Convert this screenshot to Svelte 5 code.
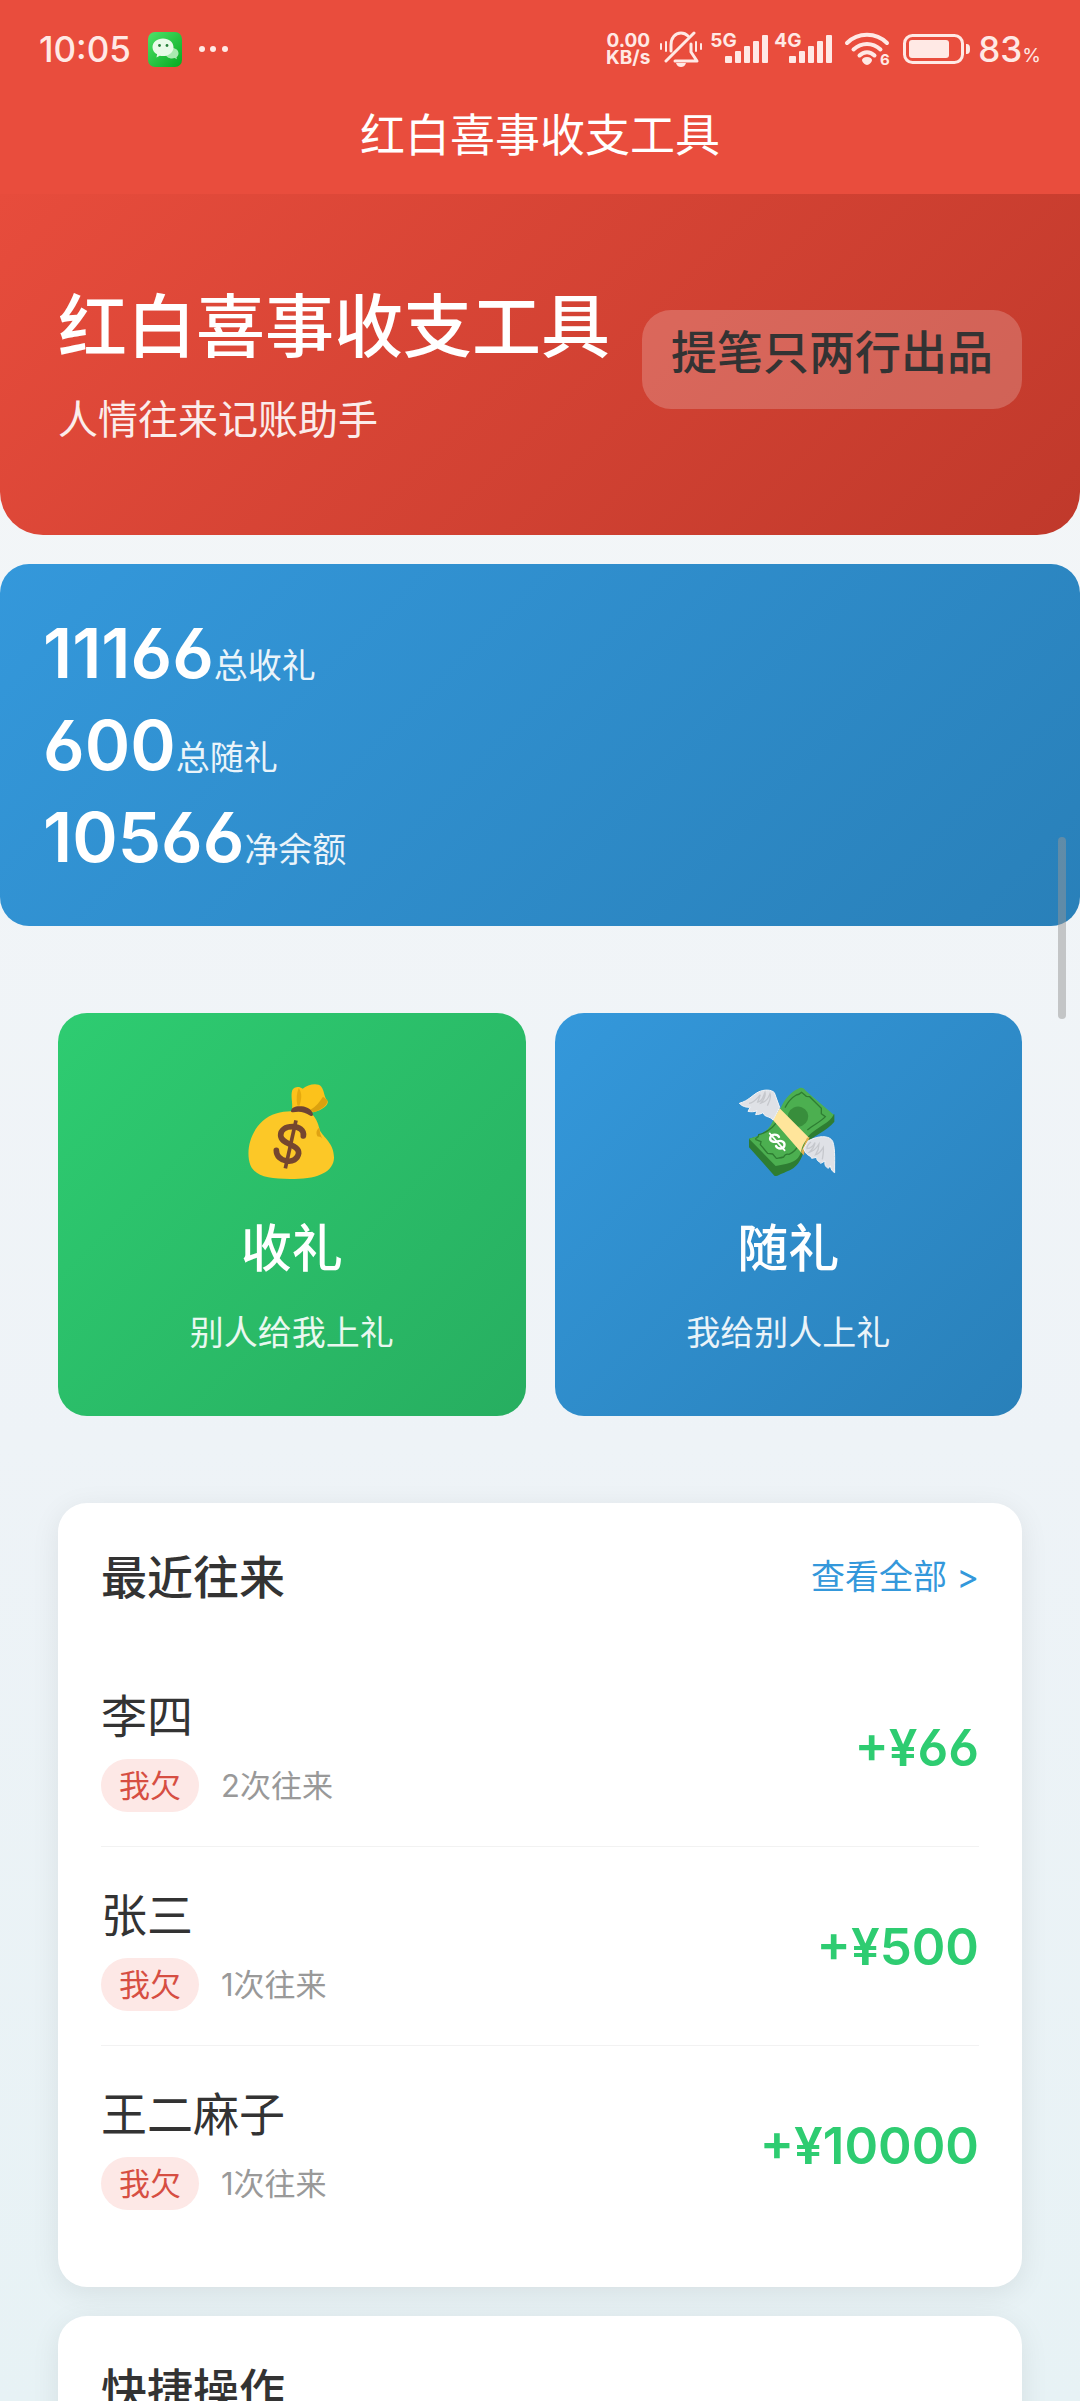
<script>
	const stats = [
		{ value: 11166, label: '总收礼' },
		{ value: 600, label: '总随礼' },
		{ value: 10566, label: '净余额' }
	];

	const records = [
		{ name: '李四', tag: '我欠', count: 2, amount: 66 },
		{ name: '张三', tag: '我欠', count: 1, amount: 500 },
		{ name: '王二麻子', tag: '我欠', count: 1, amount: 10000 }
	];

	const networks = ['5G', '4G'];
</script>

<div class="app">
	<header class="top">
		<div class="status">
			<div class="status-group">
				<span class="time">10:05</span>
				<svg class="wechat" viewBox="0 0 34 35" aria-label="微信">
					<defs>
						<linearGradient id="wechat-bg" x1="0" y1="0" x2="1" y2="1">
							<stop offset="0" stop-color="#4fe26a" />
							<stop offset="1" stop-color="#06a91f" />
						</linearGradient>
					</defs>
					<rect width="34" height="35" rx="7" fill="url(#wechat-bg)" />
					<path d="M24 16c4 0 6.500 2.300 6.500 5.200 0 1.800-.8 3-2 4l.4 2-2.200-1.100c-5 1.200-9.200-1-9.200-4.900 0-3 2.700-5.200 6.500-5.200z" fill="#a9eab0" />
					<path d="M15 6.500c6 0 10.500 3.800 10.500 8.800s-4.500 8.800-10.500 8.800c-1.200 0-2.300-.1-3.300-.4L8.500 25.500l.6-3.200C6 20.700 4.500 18.200 4.500 15.300c0-5 4.500-8.800 10.500-8.800z" fill="#e9fbe9" />
					<circle cx="11.500" cy="13.500" r="1.400" fill="#28803b" />
					<circle cx="19" cy="13.500" r="1.400" fill="#28803b" />
				</svg>
				<svg class="dots" viewBox="0 0 30 6" aria-hidden="true">
					<circle cx="3" cy="3" r="3" />
					<circle cx="14" cy="3" r="3" />
					<circle cx="26" cy="3" r="3" />
				</svg>
			</div>

			<div class="status-group">
				<span class="speed"><span>0.00</span><span>KB/s</span></span>
				<svg class="bell" viewBox="0 0 42 36" aria-hidden="true">
					<g fill="none" stroke="currentColor" stroke-width="3" stroke-linecap="round" stroke-linejoin="round">
						<path d="M11 20v-6c0-7 4-12 10-12 3 0 5 1 7 3" />
						<path d="M31 13v8l6 9H15" />
						<path d="M6 30 34 2" />
						<path d="M6 11v9M1 13v5M36 11v9M41 13v5" stroke-width="2" />
					</g>
					<path d="M16 32h10c-1 3-3 4-5 4s-4-1-5-4z" fill="currentColor" />
				</svg>
				{#each networks as network (network)}
					<span class="network">
						<span>{network}</span>
						<svg viewBox="0 0 44 28" aria-hidden="true">
							<rect x="0" y="21" width="7" height="7" rx="1" />
							<rect x="10" y="16" width="6" height="12" rx="1" />
							<rect x="19" y="11" width="6" height="17" rx="1" />
							<rect x="28" y="6" width="6" height="22" rx="1" />
							<rect x="37" y="0" width="6" height="28" rx="1" />
						</svg>
					</span>
				{/each}
				<svg class="wifi" viewBox="0 0 46 34" aria-hidden="true">
					<g fill="none" stroke="currentColor" stroke-width="4" stroke-linecap="round">
						<path d="M2 11c11-11 29-11 40 0" />
						<path d="M8.500 17.500c8-7.500 19-7.500 27 0" />
						<path d="M14.500 23.500c4.500-4.500 10.500-4.500 15 0" />
					</g>
					<path d="M22 25c3 0 5 1.500 5 3 0 2-3 5-5 5s-5-3-5-5c0-1.500 2-3 5-3z" fill="currentColor" />
					<text x="35" y="33" font-size="15" font-weight="700" fill="currentColor">6</text>
				</svg>
				<svg class="battery" viewBox="0 0 67 30" aria-hidden="true">
					<rect x="1.500" y="1.500" width="58" height="27" rx="8" fill="none" stroke="currentColor" stroke-width="3" />
					<rect x="6" y="6" width="40" height="18" rx="3" fill="currentColor" />
					<path d="M63 10c3 0 4 1 4 5s-1 5-4 5z" fill="currentColor" />
				</svg>
				<span class="level">83<small>%</small></span>
			</div>
		</div>
		<div class="nav-title">红白喜事收支工具</div>
	</header>

	<main class="page">
		<section class="hero">
			<div>
				<h1>红白喜事收支工具</h1>
				<p>人情往来记账助手</p>
			</div>
			<span class="badge">提笔只两行出品</span>
		</section>

		<section class="stats">
			{#each stats as stat (stat.label)}
				<div class="stat"><strong>{stat.value}</strong><span>{stat.label}</span></div>
			{/each}
		</section>

		<section class="actions">
			<button class="action receive" type="button">
				<svg viewBox="72 72 288 288" aria-hidden="true">
					<path d="M216 148c3-20-5-40 1-58 6-10 20-12 31-4 14-12 45-20 56-6 10 14 6 26 19 44 4 10-16 27-43 33z" fill="#fcc21b" />
					<path d="M322 120c4 12-18 31-42 37l-10-7c18-10 30-26 39-40z" fill="#dba10f" />
					<path d="M236 84c12 16 8 36 2 54l-6-2c-4-18-2-36 4-52z" fill="#e5a90f" />
					<path d="M212 154c12-5 44-2 66 10 14 16 18 32 21 46 12 24 44 40 43 84-2 40-44 62-118 63-70 1-118-5-133-42-14-38-2-96 36-131 24-22 58-30 85-30z" fill="#fcc827" />
					<path d="M298 203c-10 6-11 19-4 27 6-1 9 2 13 6-5-10-8-20-9-33z" fill="#dfa313" />
					<path d="M213 153c1-12 16-16 32-14 18 2 34 12 34 26-2 4-5 4-8 2-18-12-34-14-52-10-4 0-6-1-6-4z" fill="#6d4334" />
					<path d="M250 228c3-18-14-28-32-28-22 0-36 10-36 26 0 28 56 26 54 54-3 18-19 26-36 23-18-3-31-14-31-32" fill="none" stroke="#75462f" stroke-width="17" stroke-linecap="round" />
					<path d="m228 181-32 144" stroke="#75462f" stroke-width="11" />
				</svg>
				<span class="action-title">收礼</span>
				<span class="action-desc">别人给我上礼</span>
			</button>
			<button class="action give" type="button">
				<svg viewBox="63 72 288 288" aria-hidden="true">
					<path d="M90 236v26l76 85c8 4 14-2 18-4 32-16 60-14 76-92 22-24 64-38 86-66v-22z" fill="#2e7d32" />
					<path d="M90 236c32-8 56-18 72-54l24-40c14-30 32-48 56-58 8-2 14 2 18 8l84 72c-10 24-52 38-74 62-16 20-20 44-28 60-12 24-40 26-72 32z" fill="#4caf50" />
					<path d="M109 238c2-6 10-4 10-14 34-8 50-30 68-58M198 143c8-16 20-30 34-38 7 0 10-2 16-8l14 12 10 1 35 35v16l12 9c-12 14-38 26-54 40M242 250c-8 16-16 26-32 33-8-2-12 0-16 8-9 3-16 3-22 4l-11-13-15-2-22-26 2-9-17-7" fill="none" stroke="#2e7d32" stroke-width="4" />
					<ellipse cx="237" cy="170" rx="31" ry="30" fill="#388e3c" transform="rotate(-25 237 170)" />
					<path d="m162 180 20-35 88 88c-14 10-22 28-24 44z" fill="#ffe59b" />
					<path d="m246 277 18-44 8-1-10 24-8 30z" fill="#dcae50" />
					<path d="M180 231c-4-9-22-10-26 1-4 12 12 16 22 12 12-4 23 3 20 14-4 10-20 10-25 0" fill="none" stroke="#fff" stroke-width="7" stroke-linecap="round" />
					<path d="m152 220 45 51" stroke="#fff" stroke-width="5" stroke-linecap="round" />
					<g fill="#dfe1e6" stroke="#f4f4f6" stroke-width="3">
						<path d="M162 180c-8-10-16-8-25-14l-5-8c-7 5-16 5-22 6l4-12c-7 4-20 4-27 2l7-13c-9 3-25-2-33-11 28-8 38-24 57-34 17-8 39-8 48 2l16 44z" />
						<path d="M254 266c10 26 20 17 24 29l15-3c-1 13 12 14 12 18l13-7c-2 16 4 18 10 22l6-8c2 12 6 17 13 21-1-28 3-70-6-94-8-16-34-17-56-9l-17 7z" />
					</g>
					<path d="M90 130c16-1 26-18 34-26l-8 22c15-1 17-19 22-29 3 12-4 22-12 32 17-5 22-15 27-28 5 12-3 26-8 36M276 246c-7 6-13 14-12 20 13-1 20-10 24-18-2 15-10 22-16 28 16-4 22-14 28-24 0 13-5 24-10 32 13-4 18-14 23-22 1 13-1 26-3 36" fill="none" stroke="#c6c8cd" stroke-width="4" />
				</svg>
				<span class="action-title">随礼</span>
				<span class="action-desc">我给别人上礼</span>
			</button>
		</section>

		<section class="card">
			<div class="card-head">
				<h2>最近往来</h2>
				<a href="#all">查看全部 &gt;</a>
			</div>
			<ul>
				{#each records as record (record.name)}
					<li>
						<div>
							<div class="name">{record.name}</div>
							<div class="meta">
								<span class="tag">{record.tag}</span>
								<span>{record.count}次往来</span>
							</div>
						</div>
						<span class="amount">+¥{record.amount}</span>
					</li>
				{/each}
			</ul>
		</section>

		<section class="card">
			<div class="card-head">
				<h2>快捷操作</h2>
			</div>
		</section>
	</main>

	<div class="scroll-thumb"></div>
</div>

<style>
	:global(body) {
		margin: 0;
	}

	.app {
		position: relative;
		display: flex;
		flex-direction: column;
		height: 100vh;
		overflow: hidden;
		background: linear-gradient(180deg, #f5f7f8, #eef3f7 60%, #e7f2f5);
		color: #333;
		font-family: Inter, 'Noto Sans CJK SC', sans-serif;
	}

	h1,
	h2,
	p,
	ul {
		margin: 0;
		padding: 0;
	}

	.top {
		flex: none;
		background: #e94d3d;
		color: #fff;
	}

	.status {
		display: flex;
		justify-content: space-between;
		align-items: center;
		height: 98px;
		padding: 0 39px;
		color: #ffe9e5;
	}

	.status-group {
		display: flex;
		align-items: center;
	}

	.time {
		font-size: 35px;
		font-weight: 500;
	}

	.wechat {
		width: 34px;
		height: 35px;
		margin: 0 17px;
	}

	.dots {
		width: 30px;
		height: 6px;
		fill: currentColor;
	}

	.speed {
		display: flex;
		flex-direction: column;
		margin-right: 10px;
		font-size: 19px;
		font-weight: 700;
		line-height: 17px;
		text-align: center;
	}

	.bell {
		width: 42px;
		height: 36px;
		margin-right: 8px;
	}

	.network {
		position: relative;
		display: flex;
		margin-right: 5px;
		padding-left: 15px;
	}

	.network span {
		position: absolute;
		top: -2px;
		left: 0;
		font-size: 19px;
		font-weight: 700;
		line-height: 16px;
	}

	.network svg {
		width: 44px;
		height: 28px;
		fill: currentColor;
	}

	.wifi {
		width: 46px;
		height: 34px;
		margin: 0 12px 0 7px;
		overflow: visible;
	}

	.battery {
		width: 67px;
		height: 30px;
		margin-right: 8px;
	}

	.level {
		font-size: 35px;
		font-weight: 500;
	}

	.level small {
		font-size: 19px;
		font-weight: 400;
	}

	.nav-title {
		padding-bottom: 20px;
		font-size: 45px;
		line-height: 76px;
		text-align: center;
	}

	.page {
		flex: 1;
		min-height: 0;
	}

	.hero {
		display: flex;
		justify-content: space-between;
		align-items: center;
		padding: 87px 58px;
		border-radius: 0 0 43px 43px;
		background: linear-gradient(135deg, #e74c3c, #c0392b);
		color: #fff;
	}

	h1 {
		font-size: 69px;
		font-weight: 500;
		line-height: 92px;
	}

	.hero p {
		margin-top: 19px;
		font-size: 40px;
		line-height: 56px;
		opacity: 0.9;
	}

	.badge {
		margin-bottom: 10px;
		padding: 14px 29px 29px;
		border-radius: 29px;
		background: rgba(255, 255, 255, 0.2);
		color: #333;
		font-size: 46px;
		font-weight: 500;
		line-height: 56px;
		white-space: nowrap;
	}

	.stats {
		margin-top: 29px;
		padding: 43px;
		border-radius: 29px;
		background: linear-gradient(135deg, #3498db, #2980b9);
		color: #fff;
	}

	.stat {
		display: flex;
		align-items: baseline;
		height: 92px;
		line-height: 92px;
	}

	.stat strong {
		font-size: 69px;
		font-weight: 600;
		font-feature-settings: 'ss01';
	}

	.stat span {
		font-size: 34px;
		opacity: 0.9;
	}

	.actions {
		display: grid;
		grid-template-columns: 1fr 1fr;
		gap: 29px;
		padding: 87px 58px;
	}

	.action {
		display: flex;
		flex-direction: column;
		align-items: center;
		padding: 71px 29px 63px;
		border: 0;
		border-radius: 29px;
		color: #fff;
		font-family: inherit;
	}

	.receive {
		background: linear-gradient(135deg, #2ecc71, #27ae60);
	}

	.give {
		background: linear-gradient(135deg, #3498db, #2980b9);
	}

	.action svg {
		width: 96px;
		height: 96px;
		overflow: visible;
	}

	.action-title {
		margin-top: 39px;
		font-size: 51px;
		font-weight: 500;
		line-height: 60px;
	}

	.action-desc {
		margin-top: 34px;
		font-size: 34px;
		line-height: 40px;
		opacity: 0.9;
	}

	.card {
		margin: 0 58px 29px;
		padding: 43px;
		border-radius: 29px;
		background: #fff;
		box-shadow: 0 6px 29px rgba(0, 0, 0, 0.08);
	}

	.card-head {
		display: flex;
		justify-content: space-between;
		align-items: center;
		margin-bottom: 40px;
		line-height: 62px;
	}

	h2 {
		font-size: 46px;
		font-weight: 500;
	}

	a {
		color: #3498db;
		font-size: 34px;
		text-decoration: none;
	}

	li {
		display: flex;
		justify-content: space-between;
		align-items: center;
		padding: 35px 0 34px;
		border-bottom: 1px solid #f2f2f2;
	}

	li:last-child {
		border-bottom: 0;
	}

	.name {
		font-size: 46px;
		line-height: 66px;
	}

	.meta {
		display: flex;
		align-items: center;
		gap: 22px;
		margin-top: 10px;
		color: #999;
		font-size: 31px;
		line-height: 53px;
	}

	.tag {
		padding: 0 18px;
		border-radius: 27px;
		background: #fde8e6;
		color: #d64e42;
	}

	.amount {
		color: #2ecc71;
		font-size: 51px;
		font-weight: 600;
		font-feature-settings: 'ss01';
	}

	.scroll-thumb {
		position: absolute;
		top: 837px;
		right: 14px;
		width: 8px;
		height: 182px;
		border-radius: 4px;
		background: rgba(150, 150, 150, 0.5);
	}
</style>
